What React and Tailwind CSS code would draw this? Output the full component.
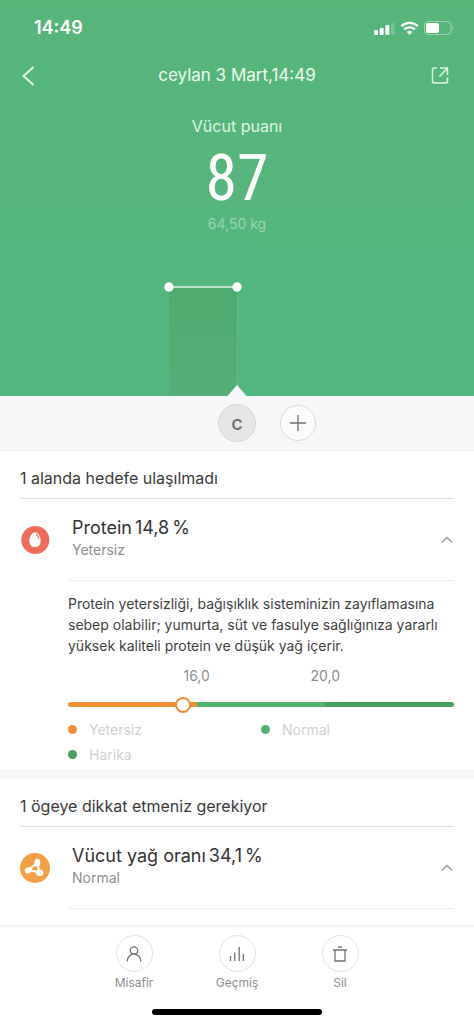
import React, { useState } from 'react';

const StatusIcons = () => (
  <svg className="w-20 h-4" viewBox="0 0 80 16" fill="none" aria-hidden="true">
    {/* signal */}
    <rect x="0" y="10" width="4" height="5" rx="1" fill="#fff" />
    <rect x="5.7" y="8" width="4" height="7" rx="1" fill="#fff" />
    <rect x="11.4" y="5" width="4" height="10" rx="1" fill="#fff" />
    <rect x="17" y="3" width="3.5" height="12" rx="1" fill="#fff" opacity="0.2" />
    {/* wifi */}
    <path d="M27.400 6.200a12 12 0 0 1 16.400 0" stroke="#fff" strokeWidth="2.300" />
    <path d="M30.400 9.400a7.600 7.600 0 0 1 10.400 0" stroke="#fff" strokeWidth="2.200" />
    <path d="M35.600 15l-2.800-3a4 4 0 0 1 5.600 0z" fill="#fff" />
    {/* battery */}
    <rect x="50.500" y="1.500" width="26.500" height="13" rx="3.500" stroke="#fff" strokeOpacity="0.4" />
    <rect x="52" y="3" width="13" height="10" rx="2" fill="#fff" />
    <path d="M78 6v4c1.300-.6 1.300-3.400 0-4z" fill="#fff" fillOpacity="0.5" />
  </svg>
);

const ScoreChart = () => (
  <svg className="block w-[150px] h-29 mx-auto" viewBox="0 0 150 116" aria-hidden="true">
    <defs>
      <linearGradient id="area" x1="0" y1="0" x2="0" y2="1">
        <stop offset="0" stopColor="#4fab70" />
        <stop offset="1" stopColor="#55ae77" />
      </linearGradient>
    </defs>
    <rect x="7" y="7" width="68" height="109" fill="url(#area)" />
    <path d="M75.500 7v100" stroke="#5fba86" strokeWidth="1" />
    <path d="M7 7h68" stroke="#b9e3ca" strokeWidth="2" />
    <circle cx="7" cy="7" r="4.700" fill="#fff" />
    <circle cx="75" cy="7" r="4.700" fill="#fff" />
    <path d="M75 105l9.500 11h-19z" fill="#f6f7f9" />
  </svg>
);

const EggIcon = () => (
  <svg className="w-[30px] h-[30px]" viewBox="0 0 30 30" aria-hidden="true">
    <circle cx="15.300" cy="15" r="14" fill="#ed6d5b" />
    <path d="M15 7.200c3.200 0 5.700 4.600 5.700 8.700 0 3.800-2.500 6.200-5.700 6.200s-5.700-2.400-5.700-6.200c0-4.100 2.500-8.700 5.700-8.700z" fill="#fff" />
    <path d="M16.400 9.600c1.200.9 2 2.300 2.300 3.900" stroke="#ed6d5b" strokeWidth="1.200" strokeLinecap="round" fill="none" />
  </svg>
);

const FatIcon = () => (
  <svg className="w-[30px] h-[30px]" viewBox="0 0 30 30" aria-hidden="true">
    <circle cx="15" cy="15" r="15" fill="#f3a044" />
    <path d="M17.300 10L8.500 17L19.600 19.500z" fill="none" stroke="#fff" strokeWidth="2" />
    <ellipse cx="17.300" cy="9.700" rx="3" ry="4" fill="#fff" />
    <ellipse cx="8.400" cy="17.200" rx="3.800" ry="3" fill="#fff" transform="rotate(-20 8.400 17.200)" />
    <ellipse cx="19.700" cy="19.700" rx="3.800" ry="3.400" fill="#fff" />
  </svg>
);

const Chevron = ({ open }) => (
  <svg className={`w-3 h-2 mr-px ${open ? '' : 'rotate-180'}`} viewBox="0 0 12 8" fill="none" stroke="#9a9a9a" strokeWidth="1.300" aria-hidden="true">
    <path d="M1 6.500L6 1.500L11 6.500" />
  </svg>
);

const legend = [
  { label: 'Yetersiz', dot: 'bg-[#ee8f37]' },
  { label: 'Normal', dot: 'bg-[#4fb36f]' },
  { label: 'Harika', dot: 'bg-[#479f61]' }
];

const ProteinDetails = () => (
  <div className="ml-12 pt-3 pb-1">
    <p className="text-sm leading-[21px] text-[#3f3f3f]">
      Protein yetersizliği, bağışıklık sisteminizin zayıflamasına sebep olabilir; yumurta, süt ve fasulye sağlığınıza yararlı yüksek kaliteli protein ve düşük yağ içerir.
    </p>
    <div className="flex justify-evenly mt-2.5 text-sm leading-5 text-[#8e8e8e]">
      <span className="w-0 flex justify-center">16,0</span>
      <span className="w-0 flex justify-center">20,0</span>
    </div>
    <input
      type="range"
      aria-label="Protein"
      min="0"
      max="100"
      value="29"
      readOnly
      className="block w-full h-[5px] mt-4 rounded-full appearance-none bg-[linear-gradient(to_right,#ee8f37_33.3%,#4fb36f_33.3%,#4fb36f_66.6%,#479f61_66.6%)] [&::-webkit-slider-thumb]:appearance-none [&::-webkit-slider-thumb]:w-4 [&::-webkit-slider-thumb]:h-4 [&::-webkit-slider-thumb]:rounded-full [&::-webkit-slider-thumb]:bg-white [&::-webkit-slider-thumb]:border-2 [&::-webkit-slider-thumb]:border-[#ee8f37]"
    />
    <ul className="grid grid-cols-2 gap-y-1 mt-3">
      {legend.map((item) => (
        <li key={item.label} className="flex items-center gap-3 h-[21px] text-sm text-[#cfcfd2]">
          <span className={`w-[9px] h-[9px] rounded-full ${item.dot}`}></span>
          {item.label}
        </li>
      ))}
    </ul>
  </div>
);

const Section = ({ heading, icon: Icon, title, value, status, children }) => {
  const [open, setOpen] = useState(true);

  return (
    <section className="bg-white px-5">
      <h2 className="h-12 pt-1.5 flex items-center text-base text-[#3a3a3a] border-b border-[#dcdcdc]">{heading}</h2>
      <button type="button" onClick={() => setOpen(!open)} aria-expanded={open} className="w-full h-[81px] flex items-center text-left">
        <Icon />
        <span className="flex-1 ml-[22px] pb-1">
          <span className="flex gap-[3px] text-lg leading-6 text-[#333]">
            <span>{title}</span>
            <span>{value}</span>
            <span>%</span>
          </span>
          <span className="block text-sm leading-5 text-[#8e8e8e]">{status}</span>
        </span>
        <Chevron open={open} />
      </button>
      <div className="ml-12 border-b border-[#ececec]"></div>
      {open && children}
    </section>
  );
};

const NavButton = ({ label, children }) => (
  <button type="button" className="w-[103px] flex flex-col items-center text-xs leading-[22px] text-[#8e8e8e]">
    <span className="w-[37px] h-[37px] rounded-full border border-[#e2e2e2] flex items-center justify-center">
      <svg className="w-5 h-5" viewBox="0 0 20 20" fill="none" stroke="#737373" strokeWidth="1.300" aria-hidden="true">
        {children}
      </svg>
    </span>
    {label}
  </button>
);

const App = () => (
  <div className="h-screen flex flex-col bg-white font-['Inter',sans-serif] overflow-hidden">
    <header className="shrink-0 bg-linear-to-b from-[#57b57a] to-[#53b681] text-white">
      <div className="h-14 flex items-center justify-between pl-[34px] pr-5">
        <span className="text-lg font-semibold">14:49</span>
        <StatusIcons />
      </div>
      <div className="h-10 flex items-center justify-between px-5">
        <button type="button" aria-label="Geri">
          <svg className="w-6 h-5" viewBox="0 0 24 20" fill="none" stroke="#e6f9e9" strokeWidth="1.800" aria-hidden="true">
            <path d="M13.500 1L3.500 10L13.500 19" />
          </svg>
        </button>
        <h1 className="text-[17px] text-[#ecfbee]">ceylan 3 Mart,14:49</h1>
        <button type="button" aria-label="Paylaş">
          <svg className="w-6 h-5" viewBox="0 0 24 20" fill="none" stroke="#def5e3" strokeWidth="1.500" aria-hidden="true">
            <path d="M7 2H4Q2.500 2 2.500 3.500V15.500Q2.500 17 4 17H16Q17.500 17 17.500 15.500V11.500" />
            <path d="M10 2H17.500V9M17.500 2L9.500 10.500" />
          </svg>
        </button>
      </div>
      <div className="text-center">
        <p className="pt-5 text-base leading-5 text-[#dff6e2]">Vücut puanı</p>
        <p className="mt-2 font-['Noto_Sans_ExtraCondensed','Roboto_Condensed','Roboto',sans-serif] text-[64px] leading-[70px] font-normal">87</p>
        <p className="text-sm leading-5 text-[#98d6ae]">64,50 kg</p>
      </div>
      <div className="pt-[46px]">
        <ScoreChart />
      </div>
    </header>

    <div className="shrink-0 h-[55px] grid grid-cols-[1fr_auto_1fr] items-center gap-6 bg-[#f6f7f9] border-b border-[#ebecee]">
      <button type="button" className="col-start-2 w-[38px] h-[38px] rounded-full bg-[#e6e6e6] border border-[#d6d6d6] text-xl font-medium leading-none text-[#6f6f6f]">c</button>
      <button type="button" aria-label="Ekle" className="w-9 h-9 rounded-full border border-[#d9dadc] bg-[#fafbfc] flex items-center justify-center">
        <svg className="w-4 h-4" viewBox="0 0 16 16" stroke="#6f6f6f" strokeWidth="1.300" aria-hidden="true">
          <path d="M8 0v16M0 8h16" />
        </svg>
      </button>
    </div>

    <main className="flex-1 min-h-0 overflow-hidden">
      <Section heading="1 alanda hedefe ulaşılmadı" icon={EggIcon} title="Protein" value="14,8" status="Yetersiz">
        <ProteinDetails />
      </Section>
      <div className="h-2.5 bg-[#f7f7f7]"></div>
      <Section heading="1 ögeye dikkat etmeniz gerekiyor" icon={FatIcon} title="Vücut yağ oranı" value="34,1" status="Normal" />
    </main>

    <nav className="shrink-0 bg-white border-t-2 border-[#f3f3f3]">
      <div className="flex justify-center pt-2">
        <NavButton label="Misafir">
          <circle cx="10" cy="6.500" r="3.700" />
          <path d="M3.200 17.500c0-4.300 2.800-7.300 6.800-7.300s6.800 3 6.800 7.300" />
        </NavButton>
        <NavButton label="Geçmiş">
          <path d="M3.500 12v5M7.700 8.500V17M12.200 3V17M16.400 10V17" />
        </NavButton>
        <NavButton label="Sil">
          <path d="M3 6h14M8 3h4M5 6v11h10V6" />
        </NavButton>
      </div>
      <div className="w-[170px] h-1.5 mx-auto mt-[15px] mb-[9px] rounded-full bg-black"></div>
    </nav>
  </div>
);

export default App;
